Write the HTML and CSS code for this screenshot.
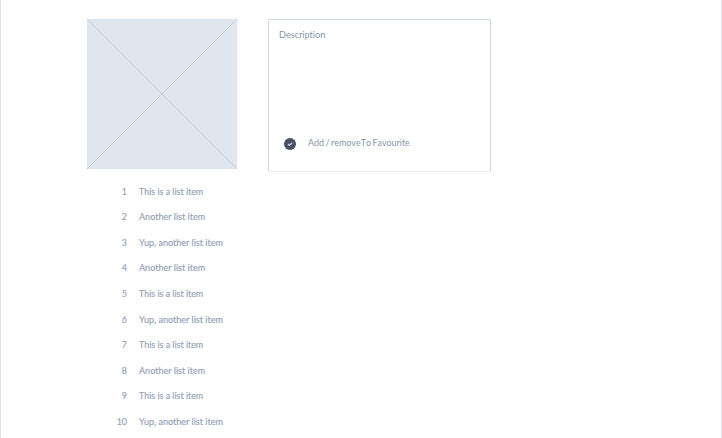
FILE: index.html
```html
<!DOCTYPE html>
<html lang="en">
<head>
<meta charset="utf-8">
<title>Item details</title>
<link rel="stylesheet" href="styles.css">
</head>
<body>
<main class="page">
  <div class="media">
    <svg class="placeholder" viewBox="0 0 150 150" aria-hidden="true">
      <path d="M0 0L150 150M150 0L0 150"/>
    </svg>
    <ol class="list">
      <li><span class="num">1</span><span class="label short">This is a list item</span></li>
      <li><span class="num">2</span><span class="label">Another list item</span></li>
      <li><span class="num">3</span><span class="label">Yup, another list item</span></li>
      <li><span class="num">4</span><span class="label">Another list item</span></li>
      <li><span class="num">5</span><span class="label short">This is a list item</span></li>
      <li><span class="num">6</span><span class="label">Yup, another list item</span></li>
      <li><span class="num">7</span><span class="label short">This is a list item</span></li>
      <li><span class="num">8</span><span class="label">Another list item</span></li>
      <li><span class="num">9</span><span class="label short">This is a list item</span></li>
      <li><span class="num">10</span><span class="label">Yup, another list item</span></li>
    </ol>
  </div>
  <section class="card">
    <p class="title">Description</p>
    <div class="favourite">
      <svg class="check" viewBox="0 0 12 12" aria-hidden="true">
        <circle cx="6" cy="6" r="6"/>
        <path d="M4 6.1L5.4 7.2L8.2 5"/>
      </svg>
      <span>Add / removeTo Favourite</span>
    </div>
  </section>
</main>
</body>
</html>
```

FILE: styles.css
```css
* {
  box-sizing: border-box;
}

body {
  margin: 0;
  background: #fff;
  font-family: Lato, sans-serif;
  font-size: 9.9px;
  font-variant-ligatures: none;
  color: #8795ab;
}

.page {
  display: flex;
  align-items: flex-start;
  gap: 31px;
  height: 438px;
  padding: 19px 0 0 86px;
  border-left: 1px solid #e0e6f0;
  border-right: 1px solid #e5e5ea;
  overflow: hidden;
}

.media {
  width: 150px;
}

.placeholder {
  display: block;
  width: 150px;
  height: 150px;
  background: #dfe6ee;
}

.placeholder path {
  stroke: #c0ccda;
  stroke-width: 1;
}

.list {
  margin: 8.7px 0 0;
  padding: 0;
  list-style: none;
  color: #98a5ba;
  -webkit-text-stroke: 0.2px #98a5ba;
}

.list li {
  display: flex;
  gap: 12px;
  height: 25.6px;
  line-height: 26px;
  white-space: nowrap;
}

.num {
  width: 40px;
  text-align: right;
  transform: scaleX(0.9);
  transform-origin: right;
}

.label {
  transform: scaleX(0.918);
  transform-origin: left;
}

.label.short {
  transform: scaleX(0.9);
}

.card {
  width: 223px;
  height: 153px;
  padding: 8px 10px;
  border: 1px solid #cdd5df;
  border-bottom-color: #e9edf2;
  border-radius: 2px;
}

.title {
  margin: 0;
  line-height: 12px;
  transform: scaleX(0.925);
  transform-origin: left;
}

.favourite {
  display: flex;
  align-items: center;
  gap: 11.8px;
  margin: 98px 0 0 5px;
  line-height: 12px;
}

.favourite span {
  margin-top: -4px;
  white-space: nowrap;
  font-kerning: none;
  word-spacing: -0.8px;
  transform: scaleX(0.9);
  transform-origin: left;
}

.check {
  width: 12px;
  height: 12px;
}

.check circle {
  fill: #475264;
}

.check path {
  fill: none;
  stroke: #ccd3dc;
  stroke-width: 1.4;
}
```
